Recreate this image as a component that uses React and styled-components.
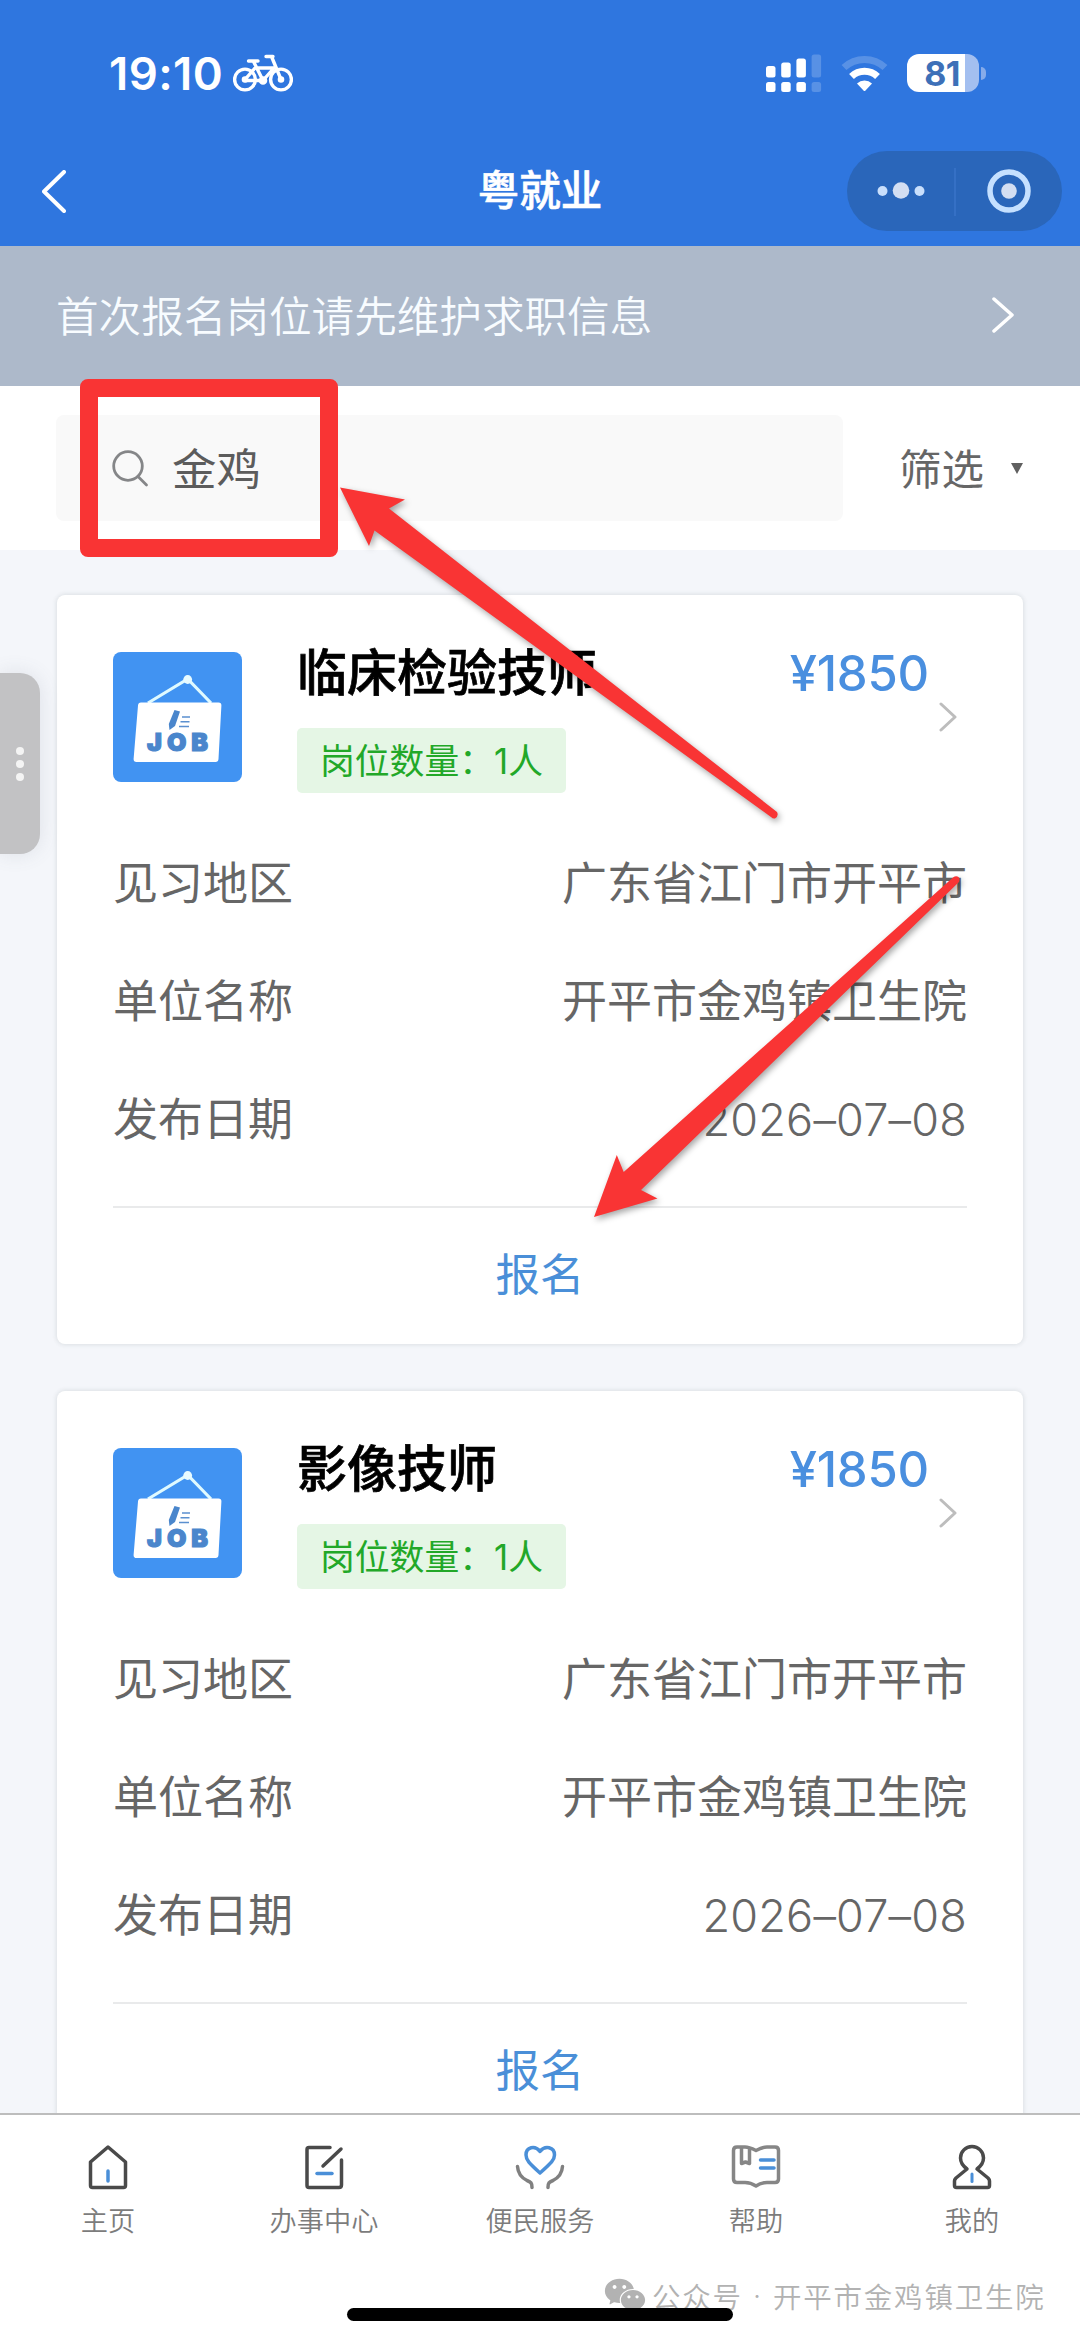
import React from 'react';
import styled, { createGlobalStyle } from 'styled-components';
import { AiFillWechat } from 'react-icons/ai';

const GlobalStyle = createGlobalStyle`
  * {
    box-sizing: border-box;
  }
  body {
    margin: 0;
    background: #fff;
    font-family: Inter, 'Noto Sans CJK SC', sans-serif;
  }
  svg {
    display: block;
    flex-shrink: 0;
  }
`

const Phone = styled.div`
  position: relative;
  display: flex;
  flex-direction: column;
  width: 1080px;
  height: 2341px;
  overflow: hidden;
  background: #fff;
`

const TopArea = styled.header`
  display: flex;
  flex-direction: column;
  height: 246px;
  flex-shrink: 0;
  background: #2f76df;
  color: #fff;
`
const StatusBar = styled.div`
  display: flex;
  align-items: center;
  height: 146px;
  padding: 0 94px 0 109px;
`
const Clock = styled.span`
  width: 124px;
  font-size: 45.5px;
  font-weight: 600;
  letter-spacing: 0.4px;
  white-space: nowrap;
`
const StatusIcons = styled.div`
  display: flex;
  align-items: center;
  gap: 19px;
  margin-left: auto;
`
const Battery = styled.div`
  display: flex;
  align-items: center;
  gap: 2px;
`
const BatteryBody = styled.div`
  display: flex;
  align-items: center;
  justify-content: center;
  width: 72px;
  height: 38px;
  padding-right: 2px;
  border-radius: 12px;
  background: linear-gradient(90deg, #fff 81%, #a3bff0 81%);
  color: #3d70b8;
  font-size: 34px;
  font-weight: 700;
  letter-spacing: -0.6px;
`
const BatteryCap = styled.div`
  width: 5px;
  height: 13px;
  border-radius: 0 5px 5px 0;
  background: #86abea;
`

const NavBar = styled.div`
  display: grid;
  grid-template-columns: 1fr auto 1fr;
  align-items: center;
  height: 90px;
  padding: 0 18px;
`
const BackButton = styled.div`
  padding-left: 24px;
`
const NavTitle = styled.h1`
  margin: 0;
  font-size: 41.5px;
  font-weight: 500;
  line-height: 60px;
  -webkit-text-stroke: 0.6px #fff;
`
const Capsule = styled.div`
  display: flex;
  align-items: center;
  justify-self: end;
  width: 215px;
  height: 80px;
  border-radius: 40px;
  background: #2a66ba;
`

const Notice = styled.div`
  display: flex;
  align-items: center;
  justify-content: space-between;
  height: 140px;
  flex-shrink: 0;
  padding: 0 66px 2px 56px;
  background: #adb9ca;
  color: #f8fcff;
  font-size: 42.6px;
  font-weight: 350;
`
const NoticeText = styled.span`
  padding-bottom: 4px;
`

const SearchSection = styled.div`
  display: flex;
  align-items: center;
  height: 164px;
  flex-shrink: 0;
  padding: 0 57px 0 56px;
  background: #fff;
`
const SearchBox = styled.div`
  display: flex;
  align-items: center;
  gap: 23px;
  width: 787px;
  height: 106px;
  padding: 0 56px;
  border-radius: 8px;
  background: #f9f9f9;
  color: #5c5c5c;
  font-size: 44.5px;
`
const FieldText = styled.span`
  padding-bottom: 4px;
`
const Filter = styled.div`
  display: flex;
  align-items: center;
  gap: 27px;
  margin-left: auto;
  color: #666;
  font-size: 42.5px;
`
const Triangle = styled.i`
  border-left: 6px solid transparent;
  border-right: 6px solid transparent;
  border-top: 11px solid #606060;
`

const JobList = styled.main`
  display: flex;
  flex-direction: column;
  flex: 1;
  gap: 47px;
  min-height: 0;
  overflow: hidden;
  padding: 45px 57px 0;
  background: #f4f6fa;
`
const Card = styled.section`
  display: flex;
  flex-direction: column;
  flex-shrink: 0;
  height: 749px;
  padding: 48px 56px 0;
  border-radius: 8px;
  background: #fff;
  box-shadow: 0 0 4px 1px rgba(60, 70, 70, 0.12);
`
const CardHead = styled.div`
  display: flex;
  height: 182px;
`
const JobIcon = styled.svg`
  margin-top: 9px;
`
const JobInfo = styled.div`
  display: flex;
  flex-direction: column;
  align-items: flex-start;
  margin-left: 55px;
`
const JobName = styled.h2`
  margin: 0;
  font-size: 50px;
  font-weight: 500;
  line-height: 60px;
  color: #000;
  -webkit-text-stroke: 0.7px #000;
`
const CountTag = styled.span`
  height: 65px;
  margin-top: 25px;
  padding: 1px 23px 0;
  border-radius: 5px;
  background: #e5f6e5;
  color: #22a828;
  font-size: 34.8px;
  line-height: 65px;
  white-space: nowrap;
`
const Price = styled.span`
  margin-left: auto;
  font-size: 49px;
  font-weight: 500;
  line-height: 61px;
  letter-spacing: -0.2px;
  color: #4a8fdf;
`
const CardArrow = styled.div`
  display: flex;
  align-items: center;
  height: 148px;
  padding: 0 10px;
`
const Row = styled.div`
  display: flex;
  align-items: center;
  justify-content: space-between;
  height: 118px;
  color: #666;
  font-size: 45px;
  line-height: 60px;
`
const DateValue = styled.span`
  font-weight: 350;
  letter-spacing: 0.2px;
`
const Apply = styled.div`
  margin-top: 27px;
  border-top: 2px solid #e9eaeb;
  color: #4a8fd8;
  font-size: 44.5px;
  line-height: 134px;
  text-align: center;
`

const TabBar = styled.nav`
  display: grid;
  grid-template-columns: repeat(5, 1fr);
  height: 228px;
  flex-shrink: 0;
  padding-top: 29px;
  border-top: 2px solid #bdbdbd;
  background: #fff;
`
const Tab = styled.div`
  display: flex;
  flex-direction: column;
  align-items: center;
  gap: 12px;
  color: #7c7c7c;
  font-size: 27.2px;
  font-weight: 350;
  line-height: 40px;
`

const Handle = styled.div`
  position: absolute;
  top: 673px;
  left: 0;
  display: flex;
  flex-direction: column;
  align-items: center;
  justify-content: center;
  gap: 5px;
  width: 40px;
  height: 181px;
  border-radius: 0 20px 20px 0;
  background: #c2c2c4;
  box-shadow: 0 0 20px rgba(90, 100, 120, 0.14);
`
const HandleDot = styled.i`
  width: 8px;
  height: 8px;
  border-radius: 50%;
  background: #f4f4f4;
`
const Watermark = styled.div`
  position: absolute;
  top: 2274px;
  left: 602px;
  display: flex;
  align-items: center;
  height: 42px;
  color: #b2b2b2;
  font-size: 28.5px;
  font-weight: 350;
  letter-spacing: 1.8px;
  white-space: nowrap;
`
const WatermarkName = styled.span`
  margin-left: 4px;
`
const Dot = styled.span`
  width: 30px;
  text-align: center;
`
const HomeIndicator = styled.div`
  position: absolute;
  top: 2308px;
  left: 347px;
  width: 386px;
  height: 13px;
  border-radius: 7px;
  background: #000;
`
const Marks = styled.svg`
  position: absolute;
  top: 0;
  left: 0;
  filter: drop-shadow(2px 3px 3px rgba(0, 0, 0, 0.35));
`
const SearchMark = styled.div`
  position: absolute;
  top: 379px;
  left: 80px;
  width: 258px;
  height: 178px;
  border: 18px solid #f93434;
  border-radius: 8px;
`

const Chevron = ({ w, h, color, stroke, left }) => (
  <svg width={w} height={h} viewBox={`0 0 ${w} ${h}`} fill="none" stroke={color} strokeWidth={stroke} strokeLinecap="round" strokeLinejoin="round">
    {left
      ? <path d={`M${w - 2} 2L2 ${h / 2}L${w - 2} ${h - 2}`} />
      : <path d={`M2 2L${w - 2} ${h / 2}L2 ${h - 2}`} />}
  </svg>
)

const Bike = () => (
  <svg width="60" height="38" viewBox="0 0 60 38" fill="none" stroke="#fff" strokeWidth="3.4" strokeLinecap="round" strokeLinejoin="round">
    <circle cx="12" cy="25.5" r="10.4" />
    <circle cx="48" cy="25.5" r="10.4" />
    <path d="M12 25.5L22 14H41L30 26.5H12M30 26.5L20.5 7.5M15.500 7H25M48 25.5L38.500 2.500H33M38.500 2.500H40" />
    <circle cx="30" cy="26.5" r="2.6" fill="#fff" />
    <circle cx="12" cy="25.5" r="1.6" fill="#fff" />
    <circle cx="48" cy="25.5" r="1.6" fill="#fff" />
  </svg>
)

const Signal = () => (
  <svg width="56" height="38" viewBox="0 0 56 38" fill="#fff">
    <rect x="0" y="12" width="9.5" height="11.5" rx="2.5" />
    <rect x="15.2" y="8.5" width="9.5" height="15" rx="2.5" />
    <rect x="30.4" y="4.5" width="9.5" height="19" rx="2.5" />
    <rect x="45.6" y="0.5" width="9.5" height="23" rx="2.5" opacity="0.2" />
    <rect x="0" y="28" width="9.5" height="10" rx="2.5" />
    <rect x="15.2" y="28" width="9.5" height="10" rx="2.5" />
    <rect x="30.4" y="28" width="9.5" height="10" rx="2.5" />
    <rect x="45.6" y="28" width="9.5" height="10" rx="2.5" opacity="0.2" />
  </svg>
)

const Wifi = () => (
  <svg width="47" height="38" viewBox="0 0 47 38" fill="none" stroke="#fff" strokeWidth="7">
    <path d="M3 13.5A30 30 0 0 1 44 13.5" opacity="0.2" />
    <path d="M10.5 22.5A19 19 0 0 1 36.500 22.500" />
    <path d="M16 29.500A11 11 0 0 1 31 29.500L24.500 36.500Q23.500 37.500 22.500 36.500Z" fill="#fff" stroke="none" />
  </svg>
)

const tabs = [
  {
    label: '主页',
    icon: (
      <>
        <path d="M25 3L42.500 18V41.500Q42.500 43.500 40.500 43.500H9.500Q7.500 43.500 7.500 41.500V18Z" stroke="#4a4a4a" />
        <path d="M25 27V37" stroke="#4a8fd8" />
      </>
    ),
  },
  {
    label: '办事中心',
    icon: (
      <>
        <path d="M31 3.500H10Q8 3.500 8 5.500V41.500Q8 43.500 10 43.500H40Q42.500 43.500 42.500 41V16M42 5L24 22" stroke="#4a4a4a" />
        <path d="M18 29.500H33" stroke="#4a8fd8" />
      </>
    ),
  },
  {
    label: '便民服务',
    icon: (
      <>
        <path d="M25 7.500C20 1 11 3 11 11C11 16 14 19 25 29C36 19 39.500 16 39.500 11C39.500 3 30 1 25 7.500Z" stroke="#4a8fd8" />
        <path d="M2.500 22.500C3 30 7 34 12 36.500C16 38 17 39 17 43.500M47.500 22.500C47 30 43 34 38 36.500C34 38 33 39 33 43.500" stroke="#808080" />
      </>
    ),
  },
  {
    label: '帮助',
    icon: (
      <>
        <path d="M25 6.500C21 4.500 17 3 14 3H6Q2.500 3 2.500 6.500V35Q2.500 38.500 6 38.500H14C19 38.500 22 40 25 42C28 40 31 38.500 36 38.500H44Q47.500 38.500 47.500 35V6.500Q47.500 3 44 3H36C32 3 28 5 25 6.500ZM10.500 4V19.500L14.500 18L18.500 19.500V4" stroke="#868686" />
        <path d="M29.500 16H43M29.500 24H43" stroke="#4a8fd8" />
      </>
    ),
  },
  {
    label: '我的',
    icon: (
      <>
        <path d="M20 25L9 34Q7.500 35.500 7.500 37V41.500Q7.500 43.500 9.500 43.500H40.500Q42.500 43.500 42.500 41.500V37Q42.500 35.500 41 34L30 25C34 22 36.500 18 36.500 14A11.500 11.500 0 0 0 13.500 14C13.500 18 16 22 20 25Z" stroke="#4a4a4a" />
        <path d="M25 30V37.500" stroke="#4a8fd8" strokeWidth="3" />
      </>
    ),
  },
]

const jobs = [
  { id: 1, name: '临床检验技师', price: '¥1850', count: 1, area: '广东省江门市开平市', company: '开平市金鸡镇卫生院', date: '2026–07–08' },
  { id: 2, name: '影像技师', price: '¥1850', count: 1, area: '广东省江门市开平市', company: '开平市金鸡镇卫生院', date: '2026–07–08' },
]

function JobCard({ job }) {
  return (
    <Card>
      <CardHead>
        <JobIcon width="129" height="130" viewBox="0 0 129 130">
          <rect width="129" height="130" rx="8" fill="#4193f2" />
          <path d="M35 51L74.700 27L98 51" fill="none" stroke="#dffaff" strokeWidth="3.200" />
          <circle cx="74.700" cy="27.500" r="4.400" fill="#e8fbff" />
          <path d="M28 50.500H105.500Q108.500 50.500 108.400 53.500L105.500 107Q105.300 110 102.500 110H23.500Q20.500 110 20.600 107L25 53.500Q25.200 50.500 28 50.500Z" fill="#fff" />
          <path d="M61.500 58L67 59.500L62 74L56.500 78L55.800 72Z" fill="#4a86cc" />
          <path d="M69 65H77M67.500 69.700H76.500M66 74.500H76" stroke="#5b90cf" strokeWidth="1.600" />
          <text x="34" y="99" fill="#4a86cc" stroke="#4a86cc" strokeWidth="1.2" fontFamily="Inter" fontSize="25" fontWeight="900" textLength="61">JOB</text>
        </JobIcon>
        <JobInfo>
          <JobName>{job.name}</JobName>
          <CountTag>岗位数量：{job.count}人</CountTag>
        </JobInfo>
        <Price>{job.price}</Price>
        <CardArrow>
          <Chevron w={18} h={30} color="#bdbdbd" stroke={3} />
        </CardArrow>
      </CardHead>
      <Row>
        <span>见习地区</span>
        <span>{job.area}</span>
      </Row>
      <Row>
        <span>单位名称</span>
        <span>{job.company}</span>
      </Row>
      <Row>
        <span>发布日期</span>
        <DateValue>{job.date}</DateValue>
      </Row>
      <Apply>报名</Apply>
    </Card>
  )
}

function App() {
  return (
    <Phone>
      <GlobalStyle />
      <TopArea>
        <StatusBar>
          <Clock>19:10</Clock>
          <Bike />
          <StatusIcons>
            <Signal />
            <Wifi />
            <Battery>
              <BatteryBody>81</BatteryBody>
              <BatteryCap />
            </Battery>
          </StatusIcons>
        </StatusBar>
        <NavBar>
          <BackButton>
            <Chevron w={24} h={43} color="#fff" stroke={4} left />
          </BackButton>
          <NavTitle>粤就业</NavTitle>
          <Capsule>
            <svg width="215" height="80" viewBox="0 0 215 80" fill="#c9dffc">
              <circle cx="35.500" cy="40" r="5" />
              <circle cx="54" cy="39.500" r="8.300" fill="#d3def2" />
              <circle cx="72.500" cy="40" r="5" />
              <path d="M108 17V65" stroke="#3a74c8" strokeWidth="1.500" />
              <circle cx="162" cy="40" r="19" fill="none" stroke="#c5e0ff" strokeWidth="5.500" />
              <circle cx="162" cy="40" r="7.800" fill="#d3def2" />
            </svg>
          </Capsule>
        </NavBar>
      </TopArea>

      <Notice>
        <NoticeText>首次报名岗位请先维护求职信息</NoticeText>
        <Chevron w={22} h={36} color="#fff" stroke={3.5} />
      </Notice>

      <SearchSection>
        <SearchBox>
          <svg width="37" height="37" viewBox="0 0 37 37" fill="none" stroke="#858688" strokeWidth="2.800" strokeLinecap="round">
            <circle cx="16" cy="16" r="14.300" />
            <path d="M26.500 27L34.500 35" />
          </svg>
          <FieldText>金鸡</FieldText>
        </SearchBox>
        <Filter>
          <FieldText>筛选</FieldText>
          <Triangle />
        </Filter>
      </SearchSection>

      <JobList>
        {jobs.map((job) => <JobCard key={job.id} job={job} />)}
      </JobList>

      <TabBar>
        {tabs.map((tab) => (
          <Tab key={tab.label}>
            <svg width="50" height="46" viewBox="0 0 50 46" fill="none" strokeWidth="3.500" strokeLinecap="round" strokeLinejoin="round">
              {tab.icon}
            </svg>
            <span>{tab.label}</span>
          </Tab>
        ))}
      </TabBar>

      <Handle>
        <HandleDot />
        <HandleDot />
        <HandleDot />
      </Handle>
      <Watermark>
        <AiFillWechat size={46} />
        <WatermarkName>公众号</WatermarkName>
        <Dot>·</Dot>
        <span>开平市金鸡镇卫生院</span>
      </Watermark>
      <HomeIndicator />

      <SearchMark />
      <Marks width="1080" height="1300" viewBox="0 0 1080 1300" fill="#f93434">
        <path d="M340 487.500L405 499.500L389 508.500L777 812Q779 816 775 818.500Q773 819 771 817L374.500 530.500L369 546Z" />
        <path d="M594 1217L616.800 1155L623.700 1172L953 877.500Q956 875.500 958.500 877Q960.500 879.500 958.500 882.500L641 1190L657.500 1198.500Z" />
      </Marks>
    </Phone>
  )
}

export default App
